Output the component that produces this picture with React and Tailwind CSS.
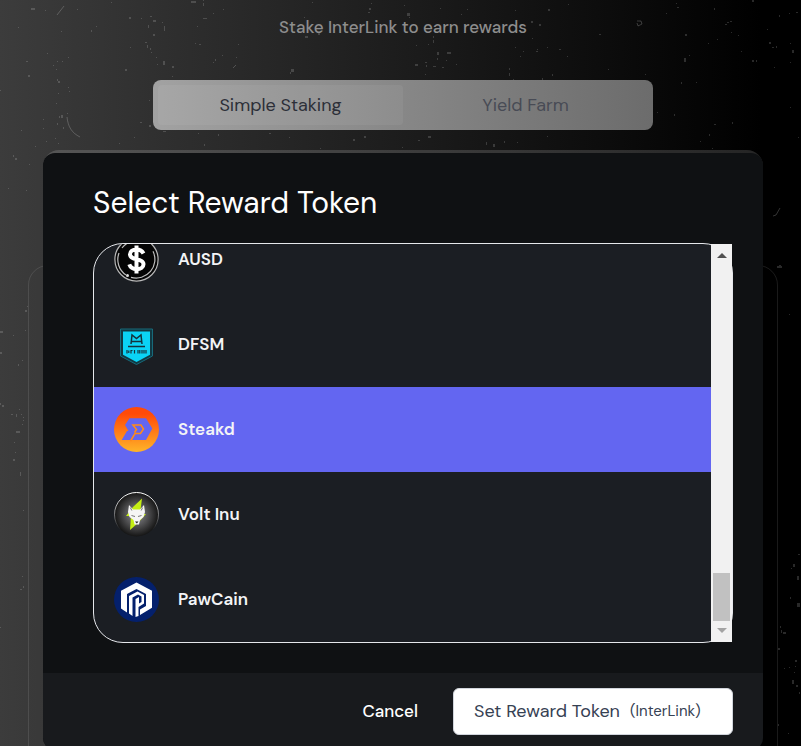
const dots = [
  // [x, y, width, height]
  [31, 8, 4, 2], [45, 10, 1, 1], [18, 27, 1, 1], [61, 31, 1, 1], [91, 30, 1, 2], [96, 26, 1, 1], [77, 9, 1, 1], [111, 2, 1, 1],
  [129, 17, 2, 2], [141, 18, 1, 1], [150, 16, 2, 1], [153, 20, 3, 2], [148, 25, 1, 3], [162, 22, 1, 1], [164, 26, 1, 5], [153, 34, 2, 2],
  [145, 42, 2, 1], [147, 45, 1, 3], [150, 48, 1, 2], [151, 52, 1, 1], [156, 57, 1, 1], [163, 61, 2, 4], [157, 64, 1, 1], [172, 66, 2, 2],
  [172, 76, 1, 1], [125, 69, 2, 2], [130, 47, 1, 1], [191, 1, 5, 2], [203, 0, 1, 1], [203, 3, 1, 3], [213, 13, 1, 1], [223, 9, 1, 1],
  [203, 18, 4, 1], [197, 26, 1, 1], [195, 43, 1, 1], [199, 44, 2, 1], [222, 55, 1, 1], [215, 59, 1, 2], [213, 62, 1, 1], [236, 57, 1, 1],
  [238, 44, 1, 1], [291, 69, 3, 3], [290, 72, 1, 2], [305, 36, 3, 2], [312, 2, 1, 1], [304, 17, 1, 1], [318, 33, 2, 2], [47, 53, 1, 1],
  [26, 61, 2, 1], [57, 61, 1, 1], [62, 61, 1, 1], [68, 57, 1, 1], [53, 65, 1, 1], [56, 69, 1, 1], [28, 75, 2, 2], [57, 79, 1, 2],
  [58, 81, 2, 2], [68, 87, 1, 1], [69, 91, 1, 1], [58, 93, 1, 1], [0, 90, 1, 1], [56, 103, 1, 1], [59, 116, 1, 2], [61, 115, 2, 3],
  [57, 123, 1, 2], [63, 127, 1, 2], [67, 113, 1, 1], [43, 119, 1, 1], [43, 128, 1, 1], [21, 130, 1, 1], [46, 141, 1, 1], [55, 138, 1, 1],
  [35, 146, 1, 1], [58, 143, 1, 1], [13, 155, 1, 2], [15, 158, 2, 2], [29, 164, 1, 1], [8, 188, 1, 1], [26, 190, 1, 1], [149, 100, 1, 1],
  [149, 125, 2, 2], [140, 122, 2, 1], [134, 137, 1, 1], [119, 143, 1, 1], [163, 131, 3, 1], [198, 133, 1, 1], [204, 144, 1, 2], [218, 134, 1, 2],
  [269, 133, 2, 1], [289, 137, 1, 1], [353, 139, 2, 2], [364, 136, 2, 2], [320, 148, 1, 1], [369, 8, 2, 2], [368, 12, 2, 1], [371, 3, 1, 1],
  [404, 5, 1, 1], [407, 13, 3, 3], [409, 17, 1, 1], [440, 8, 1, 1], [467, 9, 1, 1], [461, 14, 1, 1], [515, 10, 1, 1], [548, 9, 2, 2],
  [568, 4, 1, 1], [531, 21, 2, 2], [539, 24, 2, 2], [599, 34, 2, 1], [532, 38, 1, 1], [515, 47, 1, 1], [523, 51, 1, 1], [536, 51, 2, 1],
  [537, 49, 1, 1], [547, 47, 1, 1], [559, 49, 2, 1], [520, 56, 1, 1], [567, 56, 1, 1], [433, 36, 1, 2], [433, 40, 1, 3], [428, 44, 1, 1],
  [416, 45, 1, 1], [437, 52, 2, 3], [447, 52, 4, 2], [437, 58, 1, 2], [415, 64, 3, 2], [425, 62, 2, 1], [426, 65, 1, 2], [433, 66, 3, 1],
  [442, 67, 2, 1], [446, 60, 1, 1], [456, 64, 1, 1], [425, 74, 1, 1], [509, 68, 1, 2], [509, 73, 1, 3], [513, 79, 1, 1], [552, 74, 1, 2],
  [542, 78, 1, 2], [608, 69, 1, 1], [645, 74, 1, 1], [676, 3, 1, 1], [677, 7, 2, 1], [666, 13, 1, 1], [714, 8, 1, 2], [752, 0, 2, 2],
  [727, 22, 2, 1], [730, 21, 2, 1], [725, 24, 2, 1], [685, 34, 2, 2], [684, 58, 2, 4], [689, 55, 1, 1], [708, 43, 1, 1], [717, 39, 1, 1],
  [731, 32, 1, 1], [738, 35, 1, 1], [741, 51, 1, 1], [752, 60, 2, 2], [756, 60, 1, 2], [767, 29, 1, 1], [769, 42, 2, 2], [776, 46, 1, 2],
  [772, 47, 2, 1], [779, 15, 1, 2], [789, 13, 1, 1], [790, 43, 1, 1], [792, 50, 2, 3], [774, 67, 1, 1], [790, 62, 1, 1], [796, 12, 2, 1],
  [681, 82, 1, 2], [696, 82, 1, 1], [657, 112, 1, 1], [674, 114, 1, 2], [714, 124, 2, 1], [732, 122, 1, 2], [709, 134, 1, 2], [700, 141, 1, 1],
  [790, 107, 1, 1], [798, 137, 1, 1], [428, 136, 3, 2], [418, 140, 2, 1], [402, 147, 1, 1], [486, 142, 1, 3], [493, 144, 2, 3], [504, 141, 1, 2],
  [517, 142, 1, 1], [547, 136, 1, 1], [712, 148, 1, 1],
  [25, 310, 2, 2], [27, 306, 1, 1], [0, 331, 3, 2], [13, 335, 1, 1], [25, 330, 1, 1], [0, 352, 2, 2], [22, 360, 1, 1], [18, 364, 1, 2],
  [0, 403, 1, 2], [2, 405, 2, 2], [19, 409, 1, 1], [11, 414, 2, 1], [16, 414, 1, 3], [21, 414, 1, 1], [23, 417, 1, 1], [23, 420, 1, 1],
  [22, 424, 1, 1], [16, 431, 4, 2], [14, 442, 1, 1], [15, 452, 1, 1], [13, 459, 2, 2], [20, 472, 1, 4], [23, 510, 1, 1], [22, 576, 1, 1],
  [20, 589, 2, 1], [23, 586, 1, 2], [0, 627, 1, 1],
  [777, 266, 5, 2], [779, 265, 2, 1], [789, 314, 1, 1], [798, 554, 2, 1], [793, 564, 2, 3], [791, 568, 1, 1], [797, 576, 2, 4], [790, 597, 1, 2],
  [797, 603, 3, 4], [780, 626, 1, 2], [781, 630, 1, 3], [783, 632, 3, 2], [778, 648, 2, 2], [795, 660, 2, 2], [789, 667, 1, 1], [784, 668, 1, 1],
  [795, 666, 1, 1], [792, 680, 2, 4], [796, 685, 2, 2], [794, 672, 1, 1], [799, 692, 1, 2], [778, 724, 1, 2], [788, 733, 1, 1],
];

function Dust() {
  return (
    <svg className="absolute left-0 top-0 -z-10" width="801" height="746" aria-hidden="true">
      <g fill="#ffffff" fillOpacity="0.16">
        {dots.map(([x, y, w, h]) => (
          <rect key={`${x}-${y}`} x={x} y={y} width={w} height={h} />
        ))}
      </g>
      <g fill="none" stroke="#ffffff" strokeOpacity="0.2">
        <path d="M57 15l7-9M67 117c1 10 5 16 13 20M773 216l3-1 4-7M233 68l3-3" />
        <path d="M637 21h4l1 3-4 2-1-3" />
      </g>
    </svg>
  );
}

function AusdIcon() {
  return (
    <svg className="size-[45px] shrink-0" viewBox="0 0 45 45" aria-hidden="true">
      <circle cx="22.5" cy="22.5" r="22" fill="#050505" />
      <circle cx="22.5" cy="22.5" r="21.6" fill="none" stroke="#b9b9b9" strokeWidth="1.2" />
      <path d="M5 16a18.6 18.6 0 0 0 7 22M17 40.3a18.6 18.6 0 0 0 22-26M8 11a18.6 18.6 0 0 1 22-6" fill="none" stroke="#bdbdbd" strokeWidth="1.2" />
      <circle cx="13.5" cy="38.5" r="1.5" fill="#ddd" />
      <path d="M29.5 16.5c-1.5-3-4-4-7-4-4 0-6.5 2-6.5 4.8 0 6.7 13.5 3.4 13.5 9.9 0 3-3 5-6.8 5-3.7 0-6.3-1.7-7.4-4.8M22.5 8.5v28" fill="none" stroke="#fff" strokeWidth="4" />
    </svg>
  );
}

function DfsmIcon() {
  return (
    <svg className="size-[45px] shrink-0" viewBox="0 0 45 45" aria-hidden="true">
      <path d="M6.5 7h32v27l-16 8.500-16-8.500z" fill="#123842" stroke="#176a7b" />
      <path d="M9 9.500h27v23.200l-13.500 7.300L9 32.700z" fill="#0bd3f5" />
      <path d="M17 22l1-9 4.500 3.500L27 13l1 9M17 19.500h11M14 24.500h17" fill="none" stroke="#15313b" strokeWidth="1.5" />
      <path d="M13 28v3.500M14.800 28.500v2.500M17 28v3.500M17 28.500h1.500M20.500 28v3.500M24 28v3.500M25.800 28v3.500M28 28v3.500M30 28v3.500M32 28v3.500" fill="none" stroke="#15313b" strokeWidth="1.2" />
    </svg>
  );
}

function SteakdIcon() {
  return (
    <svg className="size-[45px] shrink-0" viewBox="0 0 45 45" aria-hidden="true">
      <defs>
        <linearGradient id="steakd" x1="0" y1="0" x2="0" y2="1">
          <stop offset="0.15" stopColor="#ff4a08" />
          <stop offset="1" stopColor="#ffb428" />
        </linearGradient>
      </defs>
      <circle cx="22.5" cy="22.5" r="22.5" fill="url(#steakd)" />
      <path d="M15.500 11.300H32l6.300 10.200L32 33H7.700l5.300-9h1.500L11 18z" fill="#6366f1" />
      <path d="M16.500 34l4.500-7.500h5.500l3-4.500-2.500-4H19l3.500 4.500-2 3" fill="none" stroke="#ff8a1a" strokeWidth="1.6" />
    </svg>
  );
}

function VoltIcon() {
  return (
    <svg className="size-[45px] shrink-0" viewBox="0 0 45 45" aria-hidden="true">
      <defs>
        <radialGradient id="volt">
          <stop offset="0.2" stopColor="#77777a" />
          <stop offset="1" stopColor="#151515" />
        </radialGradient>
        <linearGradient id="voltRing" x1="0" y1="0" x2="0" y2="1">
          <stop offset="0" stopColor="#fff" />
          <stop offset="0.85" stopColor="#fff" stopOpacity="0" />
        </linearGradient>
      </defs>
      <circle cx="22.5" cy="22.5" r="22" fill="url(#volt)" stroke="url(#voltRing)" />
      <path d="M28 6.500L19 15l-7 9h5l-1 14 8-7 8-9h-6z" fill="#c4ee13" />
      <path d="M15 13l4 4.500h7l4-4.500 1 7-1.500 5-3.500 3-1 4.500h-4.500l-1-4.500-4-3-1.500-5z" fill="#f5f5f5" />
      <path d="M16.300 15.500l1.500 3M28.700 15.500l-1.500 3M17.500 23.500l3.500 1M27.500 23.500l-3.500 1" stroke="#777" />
      <path d="M21 29.500h3.500l-1.700 2z" fill="#222" />
    </svg>
  );
}

function PawCainIcon() {
  return (
    <svg className="size-[45px] shrink-0" viewBox="0 0 45 45" aria-hidden="true">
      <circle cx="22.5" cy="22.5" r="22.5" fill="#04206c" />
      <path d="M22.500 5.500L38 13.800v17L26 38v-5.500l6-3.500V17l-9.500-5L13 17v18.500L7 31.500V13.800z" fill="#fff" />
      <path d="M15 36.500V19l8.500-4.500 6.500 3.500v8.500L24.500 30v9l-3 1V22l3.500-2v6.500l2.500-1.500v-5.500l-3.500-2-5.500 3V39z" fill="#fff" />
    </svg>
  );
}

const tokens = [
  { name: "AUSD", Icon: AusdIcon },
  { name: "DFSM", Icon: DfsmIcon },
  { name: "Steakd", Icon: SteakdIcon, selected: true },
  { name: "Volt Inu", Icon: VoltIcon },
  { name: "PawCain", Icon: PawCainIcon },
];

function TokenList() {
  return (
    <div className="flex h-[400px] rounded-[30px] border border-gray-200 bg-[#1b1e23]">
      <ul className="flex flex-1 flex-col justify-end overflow-hidden rounded-l-[29px]">
        {tokens.map(({ name, Icon, selected }) => (
          <li key={name} className="shrink-0">
            <button
              type="button"
              aria-pressed={Boolean(selected)}
              className={`flex w-full items-center gap-[19px] p-5 text-left text-[17px] font-semibold text-gray-100 ${
                selected ? "bg-[#6366f1]" : ""
              }`}
            >
              <Icon />
              {name}
            </button>
          </li>
        ))}
      </ul>

      {/* SCROLLBAR */}
      <div className="flex w-[21px] flex-col items-center justify-between bg-[#f1f1f1] py-2" aria-hidden="true">
        <svg width="10" height="6" viewBox="0 0 10 6">
          <path d="M0 6l5-5 5 5z" fill="#505050" />
        </svg>
        <div className="flex w-full flex-1 flex-col justify-end px-[2px] py-[7px]">
          <div className="h-12 bg-[#c1c1c1]" />
        </div>
        <svg width="10" height="6" viewBox="0 0 10 6">
          <path d="M0 0l5 5 5-5z" fill="#a3a3a3" />
        </svg>
      </div>
    </div>
  );
}

export default function App() {
  return (
    <main className="relative isolate h-screen overflow-hidden bg-black bg-linear-to-r/srgb from-[#3c3c3c] to-black to-95% pl-[5px] font-['DM_Sans',Inter,sans-serif]">
      <Dust />

      {/* HEADER */}
      <p className="pt-[13px] text-center text-[17px] font-medium leading-7 text-[#8d8d8d]">
        Stake InterLink to earn rewards
      </p>

      {/* TABS */}
      <div className="mx-auto mt-[39px] flex h-[50px] max-w-[500px] rounded-lg bg-linear-to-r/srgb from-[#a2a2a2] to-[#6c6c6c] p-[5px] text-lg leading-[25px]">
        <button type="button" className="flex-1 rounded bg-white/5 text-[#2c2f38]">
          Simple Staking
        </button>
        <button type="button" className="flex-1 text-[#484b55]">
          Yield Farm
        </button>
      </div>

      <div className="mt-5 grid px-[23px]">
        {/* CARD BEHIND THE DIALOG */}
        <div className="col-start-1 row-start-1 mx-auto -mb-8 mt-[115px] w-full max-w-[750px] rounded-[20px] border border-white/10" />

        {/* DIALOG */}
        <div className="col-start-1 row-start-1 mx-auto w-full max-w-[720px] rounded-2xl bg-white/15 pt-[3px]">
          <div role="dialog" aria-labelledby="dialog-title" className="overflow-hidden rounded-xl bg-[#0f1113]">
            <div className="pb-[30px] pl-[50px] pr-[30px] pt-8">
              <h2 id="dialog-title" className="mb-[22px] text-3xl leading-9 text-white">
                Select Reward Token
              </h2>
              <TokenList />
            </div>

            {/* ACTIONS */}
            <div className="flex items-center justify-end gap-[35px] bg-[#181a1d] px-[30px] py-[15px]">
              <button type="button" className="text-[17px] font-medium text-white">
                Cancel
              </button>
              <button
                type="button"
                className="flex h-[47px] w-[280px] items-center gap-[10px] rounded-md border border-gray-300 bg-white px-5 text-lg leading-[25px] text-gray-700"
              >
                Set Reward Token
                <span className="text-[15px]">(InterLink)</span>
              </button>
            </div>
          </div>
        </div>
      </div>
    </main>
  );
}
